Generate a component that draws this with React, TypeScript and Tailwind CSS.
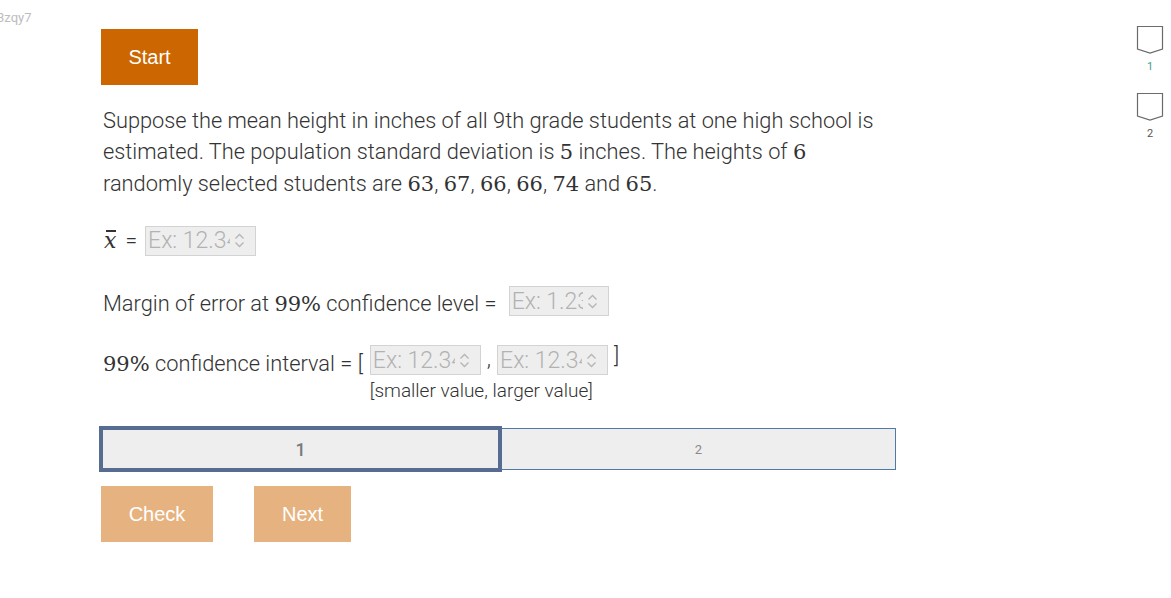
import React from "react";

const math = { fontFamily: '"DejaVu Serif", "Liberation Serif", serif' };

function Spinner() {
  return (
    <svg width="11" height="17" viewBox="0 0 11 17" fill="none" stroke="#b5b5b5" strokeWidth="1.3" className="shrink-0">
      <path d="M1.5 6.5 L5.5 2.5 L9.5 6.5" />
      <path d="M1.5 10.5 L5.5 14.5 L9.5 10.5" />
    </svg>
  );
}

function NumBox({ text, width }: { text: string; width: string }) {
  return (
    <div className={`${width} h-[30px] bg-[#eeeeee] border border-[#d3d3d3] flex items-center pl-[2px] pr-[10px] gap-[4px]`}>
      <div className="flex-1 overflow-hidden whitespace-nowrap text-[23px] font-light leading-none text-[#b2b2b2]">{text}</div>
      <Spinner />
    </div>
  );
}

function Marker({ label, color }: { label: string; color: string }) {
  return (
    <div className="flex flex-col items-center">
      <svg width="28" height="30" viewBox="0 0 28 30" fill="none" stroke="#6b6b6b" strokeWidth="1.2">
        <path d="M1.5 1.5 H26.5 V24 L14 28 L1.5 24 Z" />
      </svg>
      <span className={`text-[11px] mt-[4px] ${color}`}>{label}</span>
    </div>
  );
}

function M({ children }: { children: React.ReactNode }) {
  return (
    <span style={math} className="text-[21px]">
      {children}
    </span>
  );
}

export default function App() {
  return (
    <div className="relative w-[1171px] h-[598px] bg-white overflow-hidden text-[#333]" style={{ fontFamily: 'Roboto, "Liberation Sans", sans-serif' }}>
      <div className="absolute left-[-3px] top-[8px] text-[13px] text-[#bdbdbd]">3zqy7</div>

      <div className="absolute right-[7px] top-[25px] flex flex-col gap-[16px]">
        <Marker label="1" color="text-[#4a9a8a]" />
        <Marker label="2" color="text-[#555]" />
      </div>

      <div className="pl-[101px] pt-[29px] flex flex-col items-start">
        <button className="w-[97px] h-[56px] bg-[#cc6600] text-white text-[20px]" style={{ fontFamily: '"Liberation Sans", Arial, sans-serif' }}>
          Start
        </button>

        <p className="mt-[20px] pl-[2px] w-[820px] text-[21.8px] font-light leading-[31px]">
          Suppose the mean height in inches of all 9th grade students at one high school is
          <br />
          estimated. The population standard deviation is <M>5</M> inches. The heights of <M>6</M>
          <br />
          randomly selected students are <M>63</M>, <M>67</M>, <M>66</M>, <M>66</M>, <M>74</M> and <M>65</M>.
        </p>

        <div className="mt-[24px] pl-[2px] flex items-center gap-[8px] text-[21px] font-light">
          <span style={math} className="text-[22px]">
            <span className="relative inline-block italic px-[1px]">
              x
              <span className="absolute left-[3px] right-[1px] top-[6px] h-[1.5px] bg-[#333]" />
            </span>
          </span>
          <span>=</span>
          <NumBox text="Ex: 12.34" width="w-[111px]" />
        </div>

        <div className="mt-[28px] pl-[2px] flex items-center gap-[12px] text-[21.8px] font-light">
          <span className="relative top-[3px]">
            Margin of error at <M>99%</M> confidence level =
          </span>
          <NumBox text="Ex: 1.23" width="w-[100px]" />
        </div>

        <div className="mt-[22px] pl-[2px] flex items-start text-[21.8px] font-light">
          <span className="mt-[8px]">
            <M>99%</M> confidence interval = [
          </span>
          <div className="flex flex-col ml-[7px]">
            <div className="flex items-end">
              <NumBox text="Ex: 12.34" width="w-[111px]" />
              <span className="mx-[6px]">,</span>
              <NumBox text="Ex: 12.34" width="w-[111px]" />
              <span className="ml-[6px] mb-[3px]">]</span>
            </div>
            <span className="text-[19px] mt-[4px] leading-[24px]">[smaller value, larger value]</span>
          </div>
        </div>

        <div className="mt-[23px] ml-[-2px] flex items-center w-[797px]">
          <div className="w-[403px] h-[46px] border-4 border-[#566d91] bg-[#eeeeee] flex items-center justify-center text-[18px] font-medium text-[#7a7a7a]">
            1
          </div>
          <div className="flex-1 h-[42px] border border-[#4f7aa8] border-l-0 bg-[#eeeeee] flex items-center justify-center text-[13px] text-[#8a8a8a]">
            2
          </div>
        </div>

        <div className="mt-[14px] flex gap-[41px]" style={{ fontFamily: '"Liberation Sans", Arial, sans-serif' }}>
          <button className="w-[112px] h-[56px] bg-[#e6b380] text-white text-[20px]">Check</button>
          <button className="w-[97px] h-[56px] bg-[#e6b380] text-white text-[20px]">Next</button>
        </div>
      </div>
    </div>
  );
}
